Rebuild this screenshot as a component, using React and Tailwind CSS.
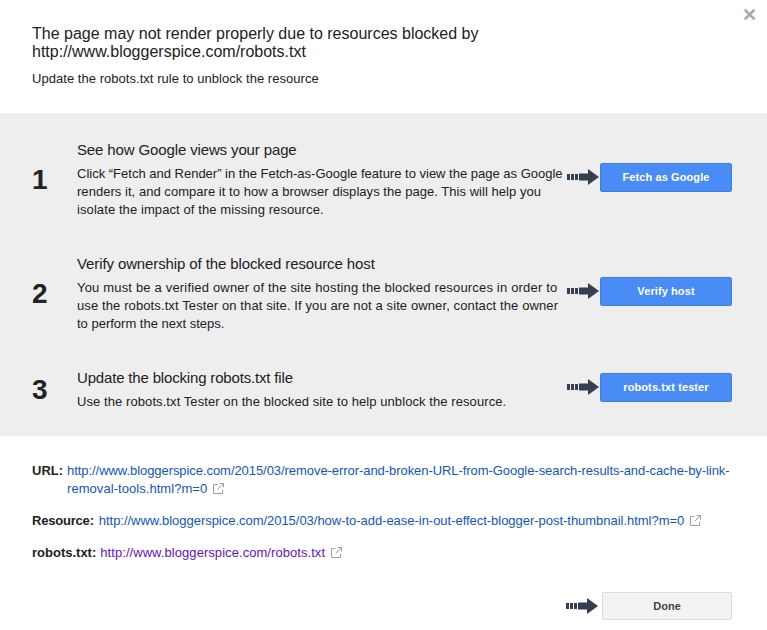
import React from 'react';

const steps = [
    {
        n: '1',
        title: 'See how Google views your page',
        titleTrack: 'tracking-[-0.13px]',
        lines: [
            { text: 'Click “Fetch and Render” in the Fetch-as-Google feature to view the page as Google', track: '' },
            { text: 'renders it, and compare it to how a browser displays the page. This will help you', track: 'tracking-[0.04px]' },
            { text: 'isolate the impact of the missing resource.', track: 'tracking-[0.09px]' },
        ],
        button: 'Fetch as Google',
    },
    {
        n: '2',
        title: 'Verify ownership of the blocked resource host',
        titleTrack: 'tracking-[-0.11px]',
        lines: [
            { text: 'You must be a verified owner of the site hosting the blocked resources in order to', track: 'tracking-[0.18px]' },
            { text: 'use the robots.txt Tester on that site. If you are not a site owner, contact the owner', track: 'tracking-[0.11px]' },
            { text: 'to perform the next steps.', track: '' },
        ],
        button: 'Verify host',
    },
    {
        n: '3',
        title: 'Update the blocking robots.txt file',
        titleTrack: 'tracking-[-0.17px]',
        lines: [
            { text: 'Use the robots.txt Tester on the blocked site to help unblock the resource.', track: 'tracking-[0.08px]' },
        ],
        button: 'robots.txt tester',
    },
];

// dashed arrow pointing at the buttons
const Arrow = () => (
    <svg width="32" height="16" viewBox="0 0 32 16" className="shrink-0" fill="#363f4f">
        <rect x="0" y="5" width="3" height="6" />
        <rect x="4" y="5" width="3" height="6" />
        <rect x="8" y="5" width="3" height="6" />
        <rect x="12" y="4.5" width="10" height="7" />
        <polygon points="21,0 32,8 21,16" />
    </svg>
);

const ExternalIcon = () => (
    <svg width="11" height="11" viewBox="0 0 11 11" fill="none" stroke="#a0a0a0" strokeWidth="1" className="inline-block ml-[6px] align-[-1px]">
        <path d="M4.5 1.5H0.5V10.5H9.5V6.5" />
        <path d="M6.5 0.5H10.5V4.5M10.5 0.5L4.5 6.5" />
    </svg>
);

const Step = ({ step }) => (
    <div className="flex items-center">
        <div className="w-[45px] shrink-0 text-[28px] leading-8 font-bold text-[#222]">{step.n}</div>
        <div className="w-[490px] shrink-0 text-[13px] leading-[18px] text-[#222]">
            <h3 className={`text-[15px] leading-[18px] font-normal mb-[6px] ${step.titleTrack}`}>{step.title}</h3>
            {step.lines.map(line => (
                <p key={line.text} className={`whitespace-nowrap ${line.track}`}>{line.text}</p>
            ))}
        </div>
        <div className="flex items-center mb-[6px]">
            <Arrow />
            <button className="ml-[1px] w-[132px] h-[29px] rounded-[2px] border border-[#3f7ee6] bg-[#4a8cf6] text-white text-[11px] font-bold tracking-[0.1px]">
                {step.button}
            </button>
        </div>
    </div>
);

export default function App() {
    return (
        <div className="relative w-[767px] h-[630px] overflow-hidden bg-white font-['Liberation_Sans',Arial,sans-serif]">
            <span className="absolute top-[6px] right-[10px] text-[#a8a8a8] text-[18px] leading-[18px] font-bold">✕</span>

            <div className="pt-[25px] px-8 h-[113px]">
                <h2 className="text-base leading-[18px] font-normal text-[#222]">
                    The page may not render properly due to resources blocked by<br />
                    http://www.bloggerspice.com/robots.txt
                </h2>
                <p className="mt-[9px] text-[13px] leading-[18px] text-[#222] tracking-[0.04px]">Update the robots.txt rule to unblock the resource</p>
            </div>

            <div className="bg-[#eeeeee] pt-[28px] pb-[25px] pl-8 flex flex-col gap-9">
                {steps.map(step => <Step key={step.n} step={step} />)}
            </div>

            <div className="px-8 pt-[26px] text-[13px] leading-[18px] whitespace-nowrap">
                <div className="flex">
                    <b className="text-[#222] mr-[4px]">URL:</b>
                    <a className="text-[#1155cc] tracking-[-0.06px]">
                        http://www.bloggerspice.com/2015/03/remove-error-and-broken-URL-from-Google-search-results-and-cache-by-link-<br />
                        <span className="tracking-[0.05px]">removal-tools.html?m=0</span>
                        <ExternalIcon />
                    </a>
                </div>
                <div className="mt-[14px]">
                    <b className="text-[#222] mr-[5px] tracking-[-0.2px]">Resource:</b>
                    <a className="text-[#1155cc] tracking-[-0.03px]">
                        http://www.bloggerspice.com/2015/03/how-to-add-ease-in-out-effect-blogger-post-thumbnail.html?m=0
                        <ExternalIcon />
                    </a>
                </div>
                <div className="mt-[14px]">
                    <b className="text-[#222] mr-[4px]">robots.txt:</b>
                    <a className="text-[#6611cc] tracking-[0.06px]">
                        http://www.bloggerspice.com/robots.txt
                        <ExternalIcon />
                    </a>
                </div>
            </div>

            <div className="flex items-center justify-end pr-[35px] mt-[30px]">
                <Arrow />
                <button className="ml-1 w-[130px] h-7 rounded-[2px] border border-[#dcdcdc] bg-[#f3f3f3] text-[#444] text-[11px] font-bold">
                    Done
                </button>
            </div>
        </div>
    );
}
